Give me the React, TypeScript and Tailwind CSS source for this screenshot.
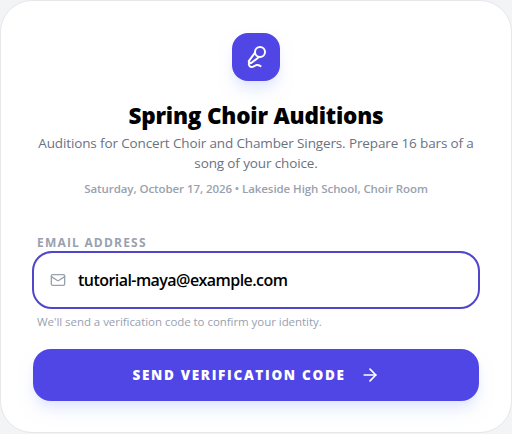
import { ArrowRight, Mail, MicVocal } from "lucide-react";

export default function App() {
  return (
    <div className="h-[434px] w-[512px] overflow-hidden bg-[#f3f4f6] font-['Open_Sans',sans-serif]">
      <div className="h-[433px] rounded-[32px] border border-gray-200 bg-white px-8 pt-8">
        <div className="flex flex-col items-center text-center">
          <div className="flex h-12 w-12 items-center justify-center rounded-2xl bg-[#4f46e5] shadow-lg shadow-indigo-100">
            <MicVocal className="h-6 w-6 text-white" strokeWidth={2} />
          </div>
          <h1 className="mt-[19px] text-[22.5px] leading-8 font-black tracking-[-0.2px] text-black">Spring Choir Auditions</h1>
          <p className="mt-px text-[13.5px] leading-5 tracking-[-0.13px] text-gray-500">
            Auditions for Concert Choir and Chamber Singers. Prepare 16 bars of a song of your choice.
          </p>
          <p className="mt-2 text-[11.5px] leading-4 font-semibold tracking-[-0.07px] text-gray-400">
            Saturday, October 17, 2026 • Lakeside High School, Choir Room
          </p>
        </div>
        <div className="mt-[38px]">
          <label className="block px-1 text-xs leading-4 font-bold tracking-[0.1em] text-gray-400">EMAIL ADDRESS</label>
          <div className="-mx-px flex h-[58px] items-center gap-3 rounded-[20px] border-2 border-[#4f46c8] bg-white px-4">
            <Mail className="h-4 w-4 text-gray-400" />
            <span className="text-base font-semibold tracking-[-0.55px] text-black">tutorial-maya@example.com</span>
          </div>
          <p className="mt-[5px] px-1 text-[11.5px] leading-4 tracking-[-0.05px] text-gray-400">We'll send a verification code to confirm your identity.</p>
        </div>
        <button className="mt-[19px] flex h-[52px] w-full items-center justify-center gap-3.5 rounded-[18px] bg-[#4f46e5] text-[13.5px] font-black tracking-[0.125em] text-white shadow-lg shadow-indigo-100">
          SEND VERIFICATION CODE
          <ArrowRight className="h-5 w-5" />
        </button>
      </div>
    </div>
  );
}
